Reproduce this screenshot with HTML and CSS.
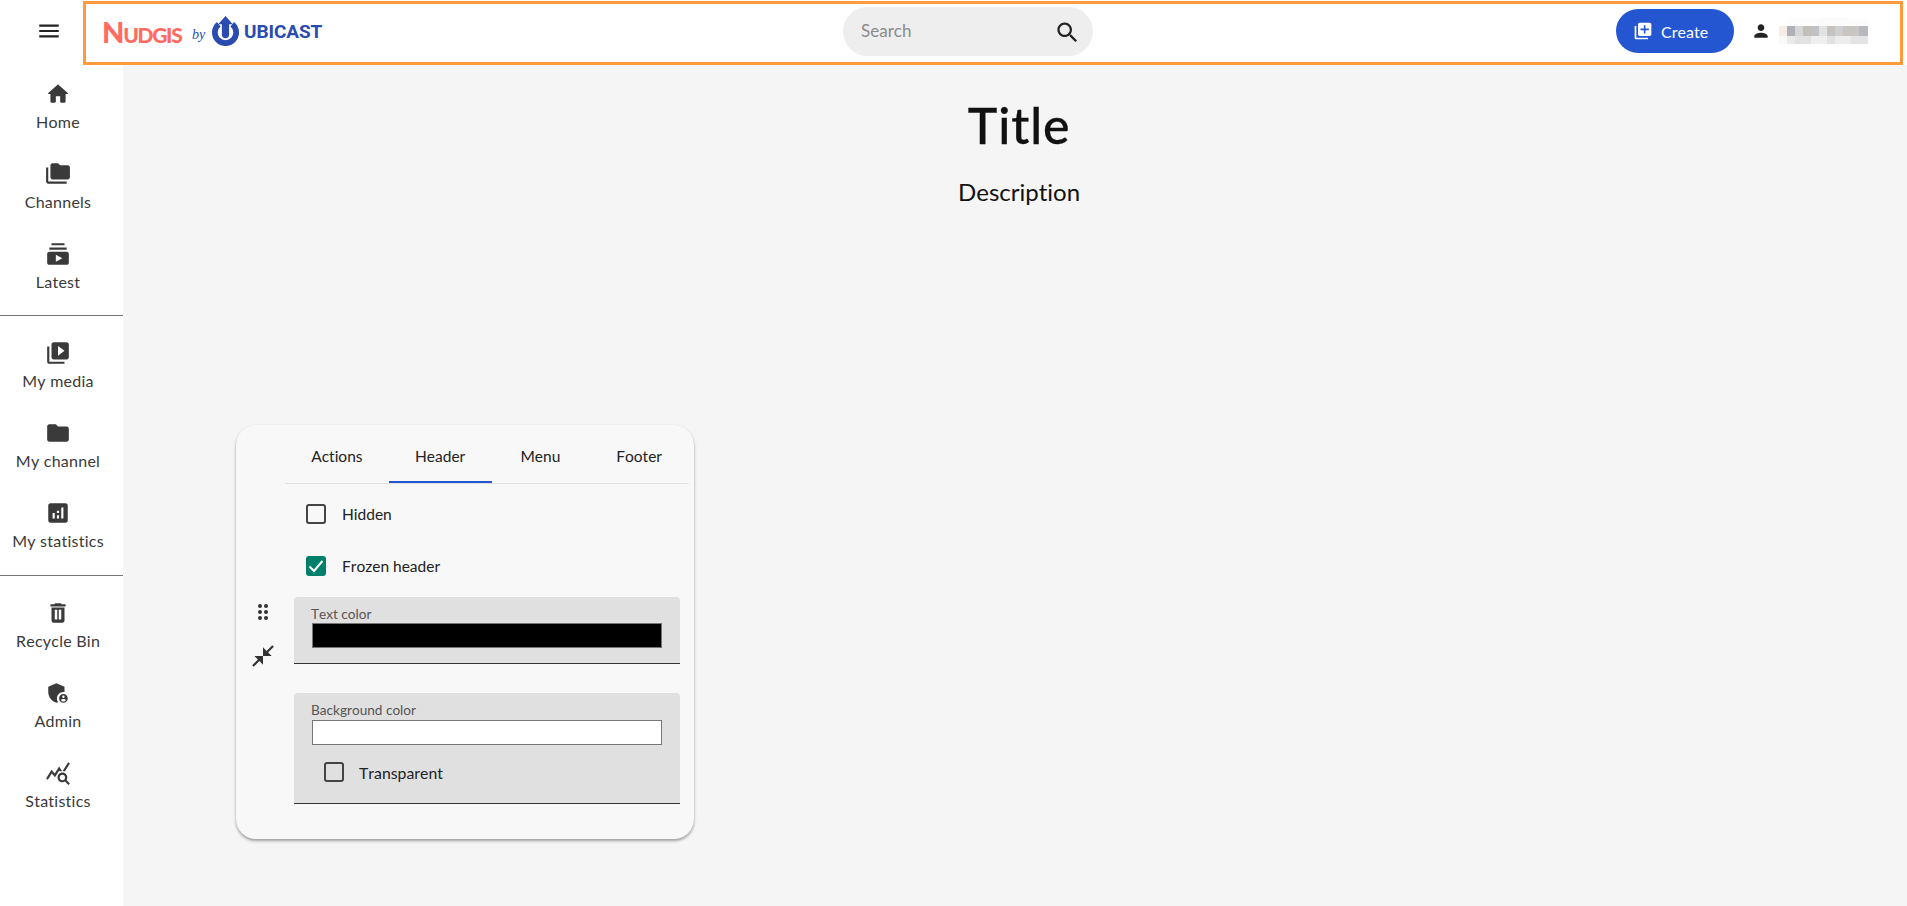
FILE: index.html
```html
<!DOCTYPE html>
<html lang="en">
<head>
<meta charset="utf-8">
<title>Nudgis</title>
<link rel="stylesheet" href="styles.css">
</head>
<body>
<div class="top">
  <div class="burger"><svg class="i26" viewBox="0 0 24 24"><path d="M3 18h18v-2H3v2zm0-5h18v-2H3v2zm0-7v2h18V6H3z"/></svg></div>
  <header class="bar">
    <div class="logo">
      <span class="nudgis"><span class="nudgis-n">N</span>UDGIS</span>
      <span class="by">by</span>
      <svg class="ubi-icon" viewBox="0 0 26 29"><path class="ubi-ring" d="M6.500 8A10.300 10.300 0 1 0 19.500 8"/><path d="M13 0L20 8H16.500V18a3.500 3.500 0 0 1-7 0V8H6Z"/></svg>
      <span class="ubicast">UBICAST</span>
    </div>
    <div class="search">
      <span class="search-text">Search</span>
      <svg class="search-icon" viewBox="0 0 24 24"><path d="M15.500 14h-.79l-.28-.27C15.410 12.590 16 11.110 16 9.500 16 5.910 13.090 3 9.500 3S3 5.910 3 9.500 5.910 16 9.500 16c1.610 0 3.090-.59 4.230-1.570l.27.280v.79l5 4.990L20.490 19l-4.990-5zm-6 0C7.010 14 5 11.990 5 9.500S7.010 5 9.500 5 14 7.010 14 9.500 11.990 14 9.500 14z"/></svg>
    </div>
    <div class="right">
      <div class="create">
        <svg class="i20" viewBox="0 0 24 24"><path d="M4 6H2v14c0 1.100.9 2 2 2h14v-2H4V6zm16-4H8c-1.100 0-2 .9-2 2v12c0 1.100.9 2 2 2h12c1.100 0 2-.9 2-2V4c0-1.100-.9-2-2-2zm-1 9h-4v4h-2v-4H9V9h4V5h2v4h4v2z"/></svg>
        <span>Create</span>
      </div>
      <svg class="i20 user" viewBox="0 0 24 24"><path d="M12 12c2.210 0 4-1.790 4-4s-1.790-4-4-4-4 1.790-4 4 1.790 4 4 4zm0 2c-2.670 0-8 1.340-8 4v2h16v-2c0-2.660-5.330-4-8-4z"/></svg>
      <div class="blur"><div class="blur-a"></div><div class="blur-b"></div><div class="blur-c"></div></div>
    </div>
  </header>
</div>
<div class="layout">
  <nav class="side">
    <div class="group">
      <a class="item"><svg class="i26" viewBox="0 0 24 24"><path d="M10 19v-5h4v5c0 .55.45 1 1 1h3c.55 0 1-.45 1-1v-7h1.700c.46 0 .68-.57.33-.87L12.670 3.600c-.38-.34-.96-.34-1.340 0l-8.360 7.530c-.34.300-.13.870.33.870H5v7c0 .55.45 1 1 1h3c.55 0 1-.45 1-1z"/></svg><span>Home</span></a>
      <a class="item"><svg class="i26" viewBox="0 0 24 24"><path d="M3 19h17v2H3c-1.100 0-2-.9-2-2V6h2v13zM23 6v9c0 1.100-.9 2-2 2H7c-1.100 0-2-.9-2-2l.01-11C5.010 2.900 5.900 2 7 2h5l2 2h7c1.100 0 2 .9 2 2z"/></svg><span>Channels</span></a>
      <a class="item"><svg class="i26" viewBox="0 0 24 24"><path d="M20 8H4V6h16v2zm-2-6H6v2h12V2zm4 10v8c0 1.100-.9 2-2 2H4c-1.100 0-2-.9-2-2v-8c0-1.100.9-2 2-2h16c1.100 0 2 .9 2 2zm-6 4l-6-3.270v6.530L16 16z"/></svg><span>Latest</span></a>
    </div>
    <div class="group">
      <a class="item"><svg class="i26" viewBox="0 0 24 24"><path d="M4 6H2v14c0 1.100.9 2 2 2h14v-2H4V6zm16-4H8c-1.100 0-2 .9-2 2v12c0 1.100.9 2 2 2h12c1.100 0 2-.9 2-2V4c0-1.100-.9-2-2-2zm-8 12.500v-9l6 4.500-6 4.500z"/></svg><span>My media</span></a>
      <a class="item"><svg class="i26" viewBox="0 0 24 24"><path d="M10 4H4c-1.100 0-1.990.9-1.990 2L2 18c0 1.100.9 2 2 2h16c1.100 0 2-.9 2-2V8c0-1.100-.9-2-2-2h-8l-2-2z"/></svg><span>My channel</span></a>
      <a class="item"><svg class="i26" viewBox="0 0 24 24"><path d="M19 3H5c-1.100 0-2 .9-2 2v14c0 1.100.9 2 2 2h14c1.100 0 2-.9 2-2V5c0-1.100-.9-2-2-2zM9 17H7v-5h2v5zm4 0h-2v-3h2v3zm0-5h-2v-2h2v2zm4 5h-2V7h2v10z"/></svg><span>My statistics</span></a>
    </div>
    <div class="group">
      <a class="item"><svg class="i26" viewBox="0 0 24 24"><path fill-rule="evenodd" d="M6 19c0 1.100.9 2 2 2h8c1.100 0 2-.9 2-2V7H6v12zM9 9h2.300v9H9zM12.700 9H15v9h-2.300zM19 4h-3.500l-1-1h-5l-1 1H5v2h14V4z"/></svg><span>Recycle Bin</span></a>
      <a class="item"><svg class="i26" viewBox="0 0 24 24"><path d="M17 11c.34 0 .67.04 1 .09V6.270L10.500 3 3 6.270v4.910c0 4.540 3.200 8.790 7.500 9.820.55-.13 1.080-.32 1.600-.55-.69-.98-1.100-2.170-1.100-3.450 0-3.310 2.690-6 6-6z"/><path d="M17 13c-2.210 0-4 1.790-4 4s1.790 4 4 4 4-1.790 4-4-1.790-4-4-4zm0 1.380c.62 0 1.120.51 1.120 1.120s-.51 1.120-1.120 1.120-1.120-.51-1.120-1.120.5-1.120 1.120-1.120zm0 5.370c-.93 0-1.740-.46-2.240-1.170.05-.72 1.510-1.080 2.240-1.080s2.190.36 2.240 1.080c-.5.71-1.310 1.170-2.240 1.170z"/></svg><span>Admin</span></a>
      <a class="item"><svg class="i26" viewBox="0 0 24 24"><path d="M19.880 18.470c.44-.7.7-1.510.7-2.390 0-2.490-2.010-4.500-4.500-4.500s-4.500 2.010-4.500 4.500 2.010 4.500 4.490 4.500c.88 0 1.700-.26 2.390-.7L21.580 23 23 21.580l-3.120-3.110zm-3.800.11c-1.380 0-2.500-1.120-2.500-2.500s1.120-2.500 2.500-2.500 2.500 1.120 2.500 2.500-1.120 2.500-2.500 2.500zm-.36-8.500c-.74.02-1.450.18-2.100.45l-.55-.83-3.800 6.180-3.010-3.520-3.630 5.810L1 17l5-8 3 3.500L13 6l2.720 4.080zm2.590.5c-.64-.28-1.330-.45-2.050-.49L21.380 2 23 3.180l-4.690 7.400z"/></svg><span>Statistics</span></a>
    </div>
  </nav>
  <main class="main">
    <h1 class="title">Title</h1>
    <p class="desc">Description</p>
    <section class="panel">
      <div class="tools">
        <svg class="grip" viewBox="0 0 12 18"><circle cx="3" cy="3" r="2"/><circle cx="9" cy="3" r="2"/><circle cx="3" cy="9" r="2"/><circle cx="9" cy="9" r="2"/><circle cx="3" cy="15" r="2"/><circle cx="9" cy="15" r="2"/></svg>
        <svg class="collapse" viewBox="0 0 24 24"><path d="M22 3.410l-5.290 5.290L20 12h-8V4l3.290 3.290L20.590 2 22 3.410zM3.410 22l5.290-5.290L12 20v-8H4l3.290 3.290L2 20.590 3.410 22z"/></svg>
      </div>
      <div class="content">
        <div class="tabs">
          <div class="tab tab-a">Actions</div>
          <div class="tab tab-on">Header</div>
          <div class="tab tab-m">Menu</div>
          <div class="tab tab-f">Footer</div>
        </div>
        <label class="check check-top"><span class="box"></span><span>Hidden</span></label>
        <label class="check check-second"><span class="box box-on"><svg viewBox="0 0 16 16"><path d="M1.500 8.500L6 13L14.500 3"/></svg></span><span>Frozen header</span></label>
        <div class="field">
          <div class="field-label">Text color</div>
          <div class="swatch swatch-black"></div>
        </div>
        <div class="field field-bg">
          <div class="field-label">Background color</div>
          <div class="swatch swatch-white"></div>
          <label class="check check-inner"><span class="box"></span><span>Transparent</span></label>
        </div>
      </div>
    </section>
  </main>
</div>
</body>
</html>
```
FILE: styles.css
```css
* { box-sizing: border-box; }
html, body { margin: 0; height: 100%; overflow: hidden; }
body { font-family: Lato, "Liberation Sans", sans-serif; font-kerning: none; font-variant-ligatures: none; color: #222; background: #fff; display: flex; flex-direction: column; }
svg { display: block; fill: currentColor; flex: none; }
.i26 { width: 26px; height: 26px; }
.i20 { width: 20px; height: 20px; }

.top { display: flex; height: 65px; flex: none; padding: 1px 4px 0 0; }
.burger { width: 83px; height: 60px; display: flex; align-items: center; justify-content: center; padding-left: 15px; }
.bar { flex: 1; height: 64px; border: 3px solid #ff9a3d; display: grid; grid-template-columns: 740px 250px 1fr; align-items: center; padding: 0 32px 4px 17px; }

.logo { display: flex; align-items: center; margin-left: -1px; }
.nudgis { font-weight: 900; color: #ff6b5f; font-size: 21px; line-height: 1; letter-spacing: -1.300px; width: 90px; }
.nudgis-n { font-size: 29px; }
.by { font-family: "Liberation Serif", serif; font-style: italic; color: #2a50b5; font-size: 14px; width: 20px; padding-top: 8px; }
.ubi-icon { width: 27px; height: 30px; fill: #2a4bb0; margin-right: 5px; }
.ubi-ring { fill: none; stroke: #2a4bb0; stroke-width: 5.500; }
.ubicast { font-family: Roboto, sans-serif; font-weight: 700; color: #2a4bb0; font-size: 19px; line-height: 1; letter-spacing: -.1px; }

.search { height: 49px; background: #eee; border-radius: 25px; display: flex; align-items: center; justify-content: space-between; padding: 0 12px 0 18px; }
.search-text { color: #8a8a8a; font-size: 17px; padding-bottom: 2px; }
.search-icon { width: 27px; height: 27px; margin-top: 2px; }

.right { display: flex; align-items: center; justify-content: flex-end; }
.create { width: 118px; height: 44px; border-radius: 22px; background: #2456d2; color: #fff; display: flex; align-items: center; gap: 8px; padding-left: 17px; font-size: 16px; margin-right: 17px; }
.user { margin-right: 8px; }
.blur { width: 89px; height: 26px; display: flex; flex-direction: column; }
.blur-a { height: 8px; background: linear-gradient(90deg, #fff 0 8px, #fdfdfd 8px 40px, #fbfbfb 40px 64px, #fcfcfc 64px); }
.blur-b { height: 10px; background: linear-gradient(90deg, #f6ece6 0 8px, #aeb2b8 8px 16px, #d6d6d6 16px 24px, #c4bebb 24px 32px, #bfc1c4 32px 40px, #e0e2e4 40px 48px, #c6c2c0 48px 56px, #cfcfcf 56px 64px, #c9c5c3 64px 80px, #b5b8bd 80px); }
.blur-c { height: 8px; background: linear-gradient(90deg, #fbf9f8 0 8px, #eaeaea 8px 16px, #e2e2e2 16px 32px, #efefef 32px 48px, #e2e2e2 48px 56px, #ededed 56px 72px, #e3e3e3 72px); }

.layout { flex: 1; display: flex; min-height: 0; }
.side { width: 123px; flex: none; background: #fff; }
.group { padding: 0 0 10px; border-bottom: 1px solid #757575; }
.group + .group { padding-top: 8px; padding-bottom: 11px; }
.group:last-child { border-bottom: 0; }
.item { display: flex; flex-direction: column; align-items: center; height: 80px; padding: 16px 7px 0 0; color: #3a3a3a; font-size: 16px; letter-spacing: .25px; line-height: 20px; }
.item span { margin-top: 5px; }

.main { flex: 1; background: #f5f5f5; position: relative; text-align: center; padding: 31px 0 0 8px; }
.title { margin: 0; font-size: 50px; font-weight: 500; line-height: 58px; color: #111; letter-spacing: .8px; -webkit-text-stroke: .3px #111; }
.desc { margin: 23px 0 0; font-size: 24px; line-height: 30px; color: #111; }

.panel { position: absolute; left: 113px; top: 360px; width: 458px; height: 414px; border-radius: 20px; background: #f8f8f8; box-shadow: 0 2px 3px rgba(0,0,0,.35), 0 0 1px rgba(0,0,0,.08); display: flex; text-align: left; }
.tools { width: 49px; flex: none; display: flex; flex-direction: column; align-items: center; padding-top: 178px; padding-left: 4px; color: #333; }
.grip { width: 12px; height: 18px; margin-bottom: 22px; }
.collapse { width: 26px; height: 26px; }
.content { flex: 1; min-width: 0; padding-right: 5px; }
.tabs { display: flex; height: 59px; border-bottom: 1px solid #e0e0e0; font-size: 15.500px; color: #222; }
.tab { height: 58px; padding-top: 21px; line-height: 20px; text-align: center; }
.tab-a { width: 104px; }
.tab-on { width: 103px; border-bottom: 2px solid #2456d2; }
.tab-m { width: 98px; }
.tab-f { width: 100px; }
.check { display: flex; align-items: center; gap: 16px; font-size: 15.500px; color: #222; }
.check-top { margin: 20px 0 0 21px; height: 20px; }
.check-second { margin: 32px 0 0 21px; height: 20px; }
.check-inner { margin: 17px 0 0 13px; height: 20px; font-size: 15.800px; gap: 15px; }
.box { width: 20px; height: 20px; border: 2px solid #444; border-radius: 3px; flex: none; }
.box-on { background: #00806a; border-color: #00806a; }
.box-on svg { width: 16px; height: 16px; fill: none; stroke: #fff; stroke-width: 2; }
.field { margin: 21px 6px 0 9px; width: 386px; height: 67px; background: #e0e0e0; border-radius: 4px 4px 0 0; border-bottom: 1px solid #333; padding: 9px 18px 0 17px; }
.field-bg { margin-top: 29px; height: 111px; }
.field-label { font-size: 13.600px; line-height: 16px; color: #555; }
.swatch { height: 25px; margin-top: 1px; background: #fff; border: 1px solid #767676; margin-left: 1px; }
.swatch-black { background: #000; }
.swatch-white { margin-top: 2px; }
```
